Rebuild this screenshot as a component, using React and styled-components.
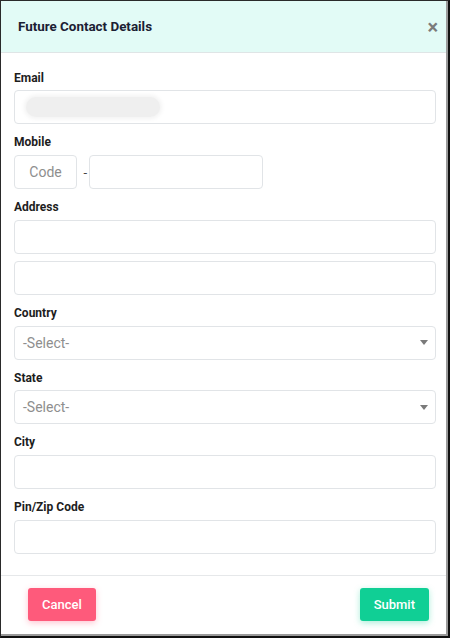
import React from "react";
import styled, { createGlobalStyle } from "styled-components";

const Global = createGlobalStyle`
  html, body { margin: 0; padding: 0; background: #fff; }
  body { font-family: Roboto, "Liberation Sans", Arial, sans-serif; }
  * { box-sizing: border-box; }
`;

const Frame = styled.div`
  width: 450px;
  height: 638px;
  border-top: 1px solid #2a2a2a;
  border-left: 1px solid #2a2a2a;
  border-right: 2px solid #111;
  border-bottom: 2px solid #111;
  display: flex;
  background: #fff;
`;

const Modal = styled.div`
  flex: 1;
  display: flex;
  flex-direction: column;
  background: #fff;
  border-right: 2px solid #9a9a9a;
  border-bottom: 2px solid #9a9a9a;
`;

const Header = styled.div`
  height: 52px;
  flex: none;
  display: flex;
  align-items: center;
  justify-content: space-between;
  padding: 0 8px 0 17px;
  background: #e2fbf6;
  border-bottom: 1px solid #dfe5e6;
`;

const Title = styled.h5`
  margin: 0;
  font-size: 13.4px;
  font-weight: 700;
  color: #1b2033;
`;

const Close = styled.span`
  font-size: 20px;
  font-weight: 700;
  line-height: 1;
  color: #7b7b7b;
`;

const Body = styled.div`
  flex: 1;
  padding: 16.5px 10px 0 13px;
  display: flex;
  flex-direction: column;
`;

const Group = styled.div`
  display: flex;
  flex-direction: column;
  margin-bottom: 10px;
`;

const Label = styled.label`
  font-size: 12px;
  font-weight: 700;
  color: #1d1d1d;
  line-height: 17.8px;
  margin-bottom: 3px;
`;

const Input = styled.div`
  height: 34px;
  width: ${(p) => p.$w || "100%"};
  border: 1px solid #e1e4e7;
  border-radius: 4px;
  background: #fff;
  display: flex;
  align-items: center;
  justify-content: ${(p) => (p.$center ? "center" : "space-between")};
  padding: 0 8px;
  font-size: 14px;
  color: #8e8e8e;
  & + & {
    margin-top: 7px;
  }
`;

const Blur = styled.div`
  width: 134px;
  height: 20px;
  margin-left: 3px;
  border-radius: 10px;
  background: #efefef;
  box-shadow: 0 0 4px 2px #f3f3f3;
`;

const Row = styled.div`
  display: flex;
  align-items: center;
`;

const Dash = styled.span`
  width: 12px;
  text-align: right;
  padding-right: 2px;
  font-size: 13px;
  color: #444;
`;

const Caret = styled.span`
  width: 0;
  height: 0;
  border-left: 4.5px solid transparent;
  border-right: 4.5px solid transparent;
  border-top: 5px solid #7a7a7a;
  margin-right: -1px;
`;

const Footer = styled.div`
  height: 59px;
  flex: none;
  border-top: 1px solid #e6e8ea;
  display: flex;
  align-items: center;
  justify-content: space-between;
  padding: 0 17px 2px 27px;
`;

const Button = styled.button`
  height: 33px;
  padding: 0 ${(p) => p.$px || 14}px;
  border: none;
  border-radius: 3px;
  font-family: inherit;
  font-size: 13px;
  font-weight: 500;
  color: #fff;
  background: ${(p) => p.$bg};
  box-shadow: 0 2px 6px ${(p) => p.$glow};
`;

const Field = ({ label, children }) => (
  <Group>
    <Label>{label}</Label>
    {children}
  </Group>
);

export default function App() {
  return (
    <>
      <Global />
      <Frame>
        <Modal>
          <Header>
            <Title>Future Contact Details</Title>
            <Close>×</Close>
          </Header>
          <Body>
            <Field label="Email">
              <Input>
                <Blur />
              </Input>
            </Field>
            <Field label="Mobile">
              <Row>
                <Input $w="63px" $center>Code</Input>
                <Dash>-</Dash>
                <Input $w="174px" />
              </Row>
            </Field>
            <Field label="Address">
              <Input />
              <Input />
            </Field>
            <Field label="Country">
              <Input>
                -Select-
                <Caret />
              </Input>
            </Field>
            <Field label="State">
              <Input>
                -Select-
                <Caret />
              </Input>
            </Field>
            <Field label="City">
              <Input />
            </Field>
            <Field label="Pin/Zip Code">
              <Input />
            </Field>
          </Body>
          <Footer>
            <Button $bg="#fe5a7b" $glow="rgba(254,90,123,0.35)" $px={14}>
              Cancel
            </Button>
            <Button $bg="#10cf95" $glow="rgba(16,207,149,0.35)" $px={14}>
              Submit
            </Button>
          </Footer>
        </Modal>
      </Frame>
    </>
  );
}
